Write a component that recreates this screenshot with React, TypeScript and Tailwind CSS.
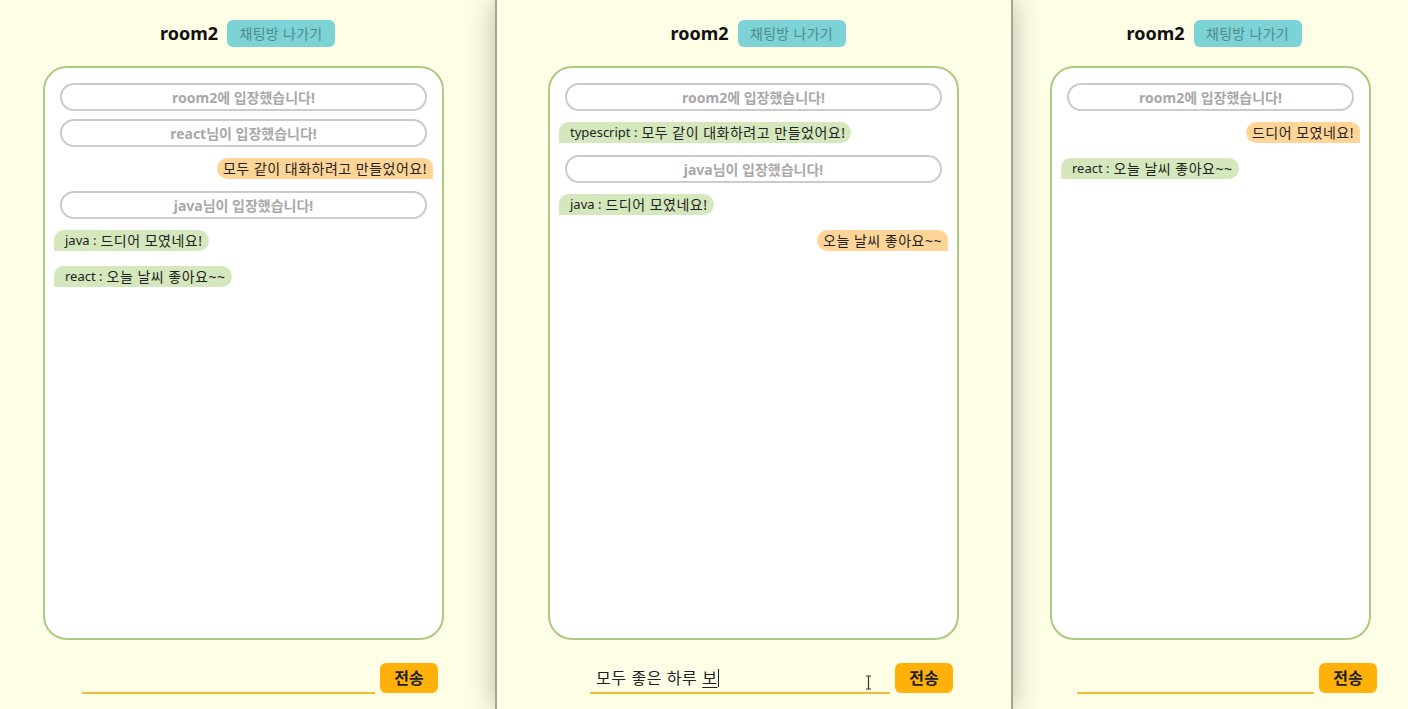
import React from 'react'

type Msg =
  | { kind: 'system'; text: string }
  | { kind: 'mine'; text: string }
  | { kind: 'other'; user: string; text: string }

type Pane = {
  width: string
  boxMl: string
  boxW: string
  inputMl: string
  inputW: string
  headerShift: string
  messages: Msg[]
  draft?: boolean
}

function SystemPill({ text }: { text: string }) {
  return (
    <div className="mx-[6px] my-[4px] h-[28px] rounded-full border-2 border-[#cbcbcb] flex items-center justify-center text-[14px] font-bold text-[#a8a8a8]">
      {text}
    </div>
  )
}

function Bubble({ msg }: { msg: Msg }) {
  if (msg.kind === 'mine') {
    return (
      <div className="flex justify-end mt-[7px] mb-[8px]">
        <div className="h-[21px] px-[6px] flex items-center bg-[#ffd597] rounded-l-[11px] rounded-tr-[10px] text-[14px] tracking-[0.5px] text-[#222]">
          {msg.text}
        </div>
      </div>
    )
  }
  if (msg.kind === 'other') {
    return (
      <div className="flex justify-start mt-[7px] mb-[8px]">
        <div className="h-[21px] pl-[11px] pr-[6px] flex items-center bg-[#d5e8bd] rounded-r-[11px] rounded-tl-[10px] text-[14px] text-[#222]">
          <span className="text-[13px] mr-1">{msg.user} :</span>
          <span className="tracking-[0.5px]">{msg.text}</span>
        </div>
      </div>
    )
  }
  return <SystemPill text={msg.text} />
}

function ChatPane({ pane }: { pane: Pane }) {
  return (
    <div className={`${pane.width} h-full shrink-0 flex flex-col`}>
      {/* Header */}
      <div className={`pt-[20px] flex items-center justify-center gap-[9px] ${pane.headerShift}`}>
        <span className="text-[18px] font-bold text-[#111]">room2</span>
        <button className="h-[27px] w-[108px] rounded-[6px] bg-[#7cd2d4] text-[14px] tracking-[0.3px] text-[#4f8a8f]">
          채팅방 나가기
        </button>
      </div>

      {/* Chat box */}
      <div
        className={`${pane.boxMl} ${pane.boxW} mt-[19px] h-[574px] rounded-[24px] border-2 border-[#a9cc80] bg-white px-[9px] pt-[11px] flex flex-col`}
      >
        {pane.messages.map((m, i) => (
          <Bubble key={i} msg={m} />
        ))}
      </div>

      {/* Input */}
      <div className={`${pane.inputMl} mt-[23px] flex items-end`}>
        <div className={`${pane.inputW} h-[30px] border-b-2 border-[#efbd3a] relative flex items-center pl-[6px] text-[16px] tracking-[0.6px] text-[#222]`}>
          {pane.draft && (
            <>
              <span className="whitespace-pre">모두 좋은 하루 </span>
              <span className="underline underline-offset-[3px]">보</span>
              <span className="w-px h-[18px] bg-[#222]" />
              <svg className="absolute right-[18px] top-[11px]" width="7" height="15" viewBox="0 0 7 15">
                <path d="M1 1h5M3.5 1v13M1 14h5" stroke="#333" strokeWidth="1.2" fill="none" />
              </svg>
            </>
          )}
        </div>
        <button className="ml-[5px] w-[58px] h-[30px] rounded-[6px] bg-[#ffb10a] text-[16px] font-bold text-[#222] mb-[1px]">
          전송
        </button>
      </div>
    </div>
  )
}

const panes: Pane[] = [
  {
    width: 'w-[495px]',
    boxMl: 'ml-[43px]',
    boxW: 'w-[401px]',
    inputMl: 'ml-[82px]',
    inputW: 'w-[293px]',
    headerShift: '',
    messages: [
      { kind: 'system', text: 'room2에 입장했습니다!' },
      { kind: 'system', text: 'react님이 입장했습니다!' },
      { kind: 'mine', text: '모두 같이 대화하려고 만들었어요!' },
      { kind: 'system', text: 'java님이 입장했습니다!' },
      { kind: 'other', user: 'java', text: '드디어 모였네요!' },
      { kind: 'other', user: 'react', text: '오늘 날씨 좋아요~~' },
    ],
  },
  {
    width: 'w-[514px]',
    boxMl: 'ml-[51px]',
    boxW: 'w-[411px]',
    inputMl: 'ml-[93px]',
    inputW: 'w-[300px]',
    headerShift: 'pl-[8px]',
    draft: true,
    messages: [
      { kind: 'system', text: 'room2에 입장했습니다!' },
      { kind: 'other', user: 'typescript', text: '모두 같이 대화하려고 만들었어요!' },
      { kind: 'system', text: 'java님이 입장했습니다!' },
      { kind: 'other', user: 'java', text: '드디어 모였네요!' },
      { kind: 'mine', text: '오늘 날씨 좋아요~~' },
    ],
  },
  {
    width: 'w-[394px]',
    boxMl: 'ml-[37px]',
    boxW: 'w-[321px]',
    inputMl: 'ml-[64px]',
    inputW: 'w-[237px]',
    headerShift: 'pl-[8px]',
    messages: [
      { kind: 'system', text: 'room2에 입장했습니다!' },
      { kind: 'mine', text: '드디어 모였네요!' },
      { kind: 'other', user: 'react', text: '오늘 날씨 좋아요~~' },
    ],
  },
]

export default function App() {
  return (
    <div className="w-[1408px] h-[709px] overflow-hidden bg-[#fefde6] flex font-['Noto_Sans','Noto_Sans_CJK_KR',sans-serif]">
      <ChatPane pane={panes[0]} />
      {/* middle window sits on top of the others */}
      <div className="relative z-10 h-full border-x-2 border-[#a3a39c] bg-[#fefde6] shadow-[0_0_26px_rgba(60,60,40,0.35)]">
        <ChatPane pane={panes[1]} />
      </div>
      <ChatPane pane={panes[2]} />
    </div>
  )
}
